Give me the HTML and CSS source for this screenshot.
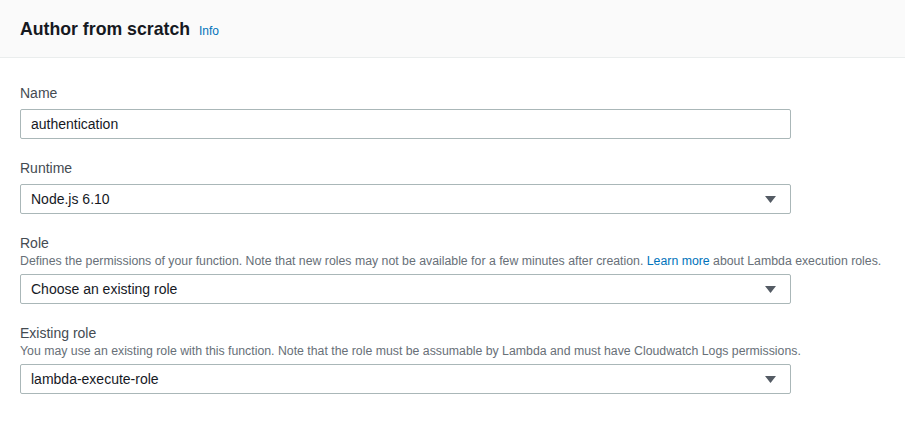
FILE: index.html
```html
<!DOCTYPE html>
<html lang="en">
<head>
<meta charset="utf-8">
<title>Author from scratch</title>
<link rel="stylesheet" href="styles.css">
</head>
<body>
<div class="panel">
  <div class="panel-header">
    <h2 class="title">Author from scratch</h2>
    <a class="info" href="#">Info</a>
  </div>
  <div class="panel-body">
    <div class="field">
      <label class="label">Name</label>
      <div class="control"><span class="value">authentication</span></div>
    </div>
    <div class="field">
      <label class="label">Runtime</label>
      <div class="control select"><span class="value">Node.js 6.10</span><svg class="caret" width="11" height="7" viewBox="0 0 11 7"><path d="M0 0H11L5.5 7Z" fill="#545b64"/></svg></div>
    </div>
    <div class="field">
      <label class="label">Role</label>
      <p class="desc">Defines the permissions of your function. Note that new roles may not be available for a few minutes after creation. <a href="#" class="link">Learn more</a> about Lambda execution roles.</p>
      <div class="control select"><span class="value">Choose an existing role</span><svg class="caret" width="11" height="7" viewBox="0 0 11 7"><path d="M0 0H11L5.5 7Z" fill="#545b64"/></svg></div>
    </div>
    <div class="field">
      <label class="label">Existing role</label>
      <p class="desc">You may use an existing role with this function. Note that the role must be assumable by Lambda and must have Cloudwatch Logs permissions.</p>
      <div class="control select"><span class="value">lambda-execute-role</span><svg class="caret" width="11" height="7" viewBox="0 0 11 7"><path d="M0 0H11L5.5 7Z" fill="#545b64"/></svg></div>
    </div>
  </div>
</div>
</body>
</html>
```
FILE: styles.css
```css
html, body {
  margin: 0;
  padding: 0;
  background: #ffffff;
}
body {
  font-family: "Liberation Sans", Arial, sans-serif;
  color: #16191f;
}
.panel-header {
  height: 58px;
  box-sizing: border-box;
  display: flex;
  align-items: center;
  padding: 2px 20px 0;
  background: #fafafa;
  border-bottom: 1px solid #eaeded;
}
.title {
  margin: 0;
  font-size: 17.7px;
  font-weight: 700;
  color: #16191f;
}
.info {
  margin-left: 9px;
  margin-top: 3px;
  font-size: 12px;
  color: #0073bb;
  text-decoration: none;
}
.panel-body {
  padding: 25px 20px 0;
  display: flex;
  flex-direction: column;
  gap: 19px;
}
.field {
  display: flex;
  flex-direction: column;
}
.label {
  font-size: 14px;
  line-height: 20px;
  color: #444b52;
  margin-bottom: 6px;
}
.desc {
  margin: -6px 0 5px;
  font-size: 12.3px;
  line-height: 16px;
  color: #687078;
  white-space: nowrap;
}
.link {
  color: #0073bb;
  text-decoration: none;
}
.control {
  width: 771px;
  height: 30px;
  box-sizing: border-box;
  border: 1px solid #aab7b8;
  border-radius: 2px;
  display: flex;
  align-items: center;
  justify-content: space-between;
  padding: 0 14px 0 10px;
  font-size: 14px;
  color: #16191f;
  background: #fff;
}
.caret {
  display: block;
  margin-top: 1px;
}
```
